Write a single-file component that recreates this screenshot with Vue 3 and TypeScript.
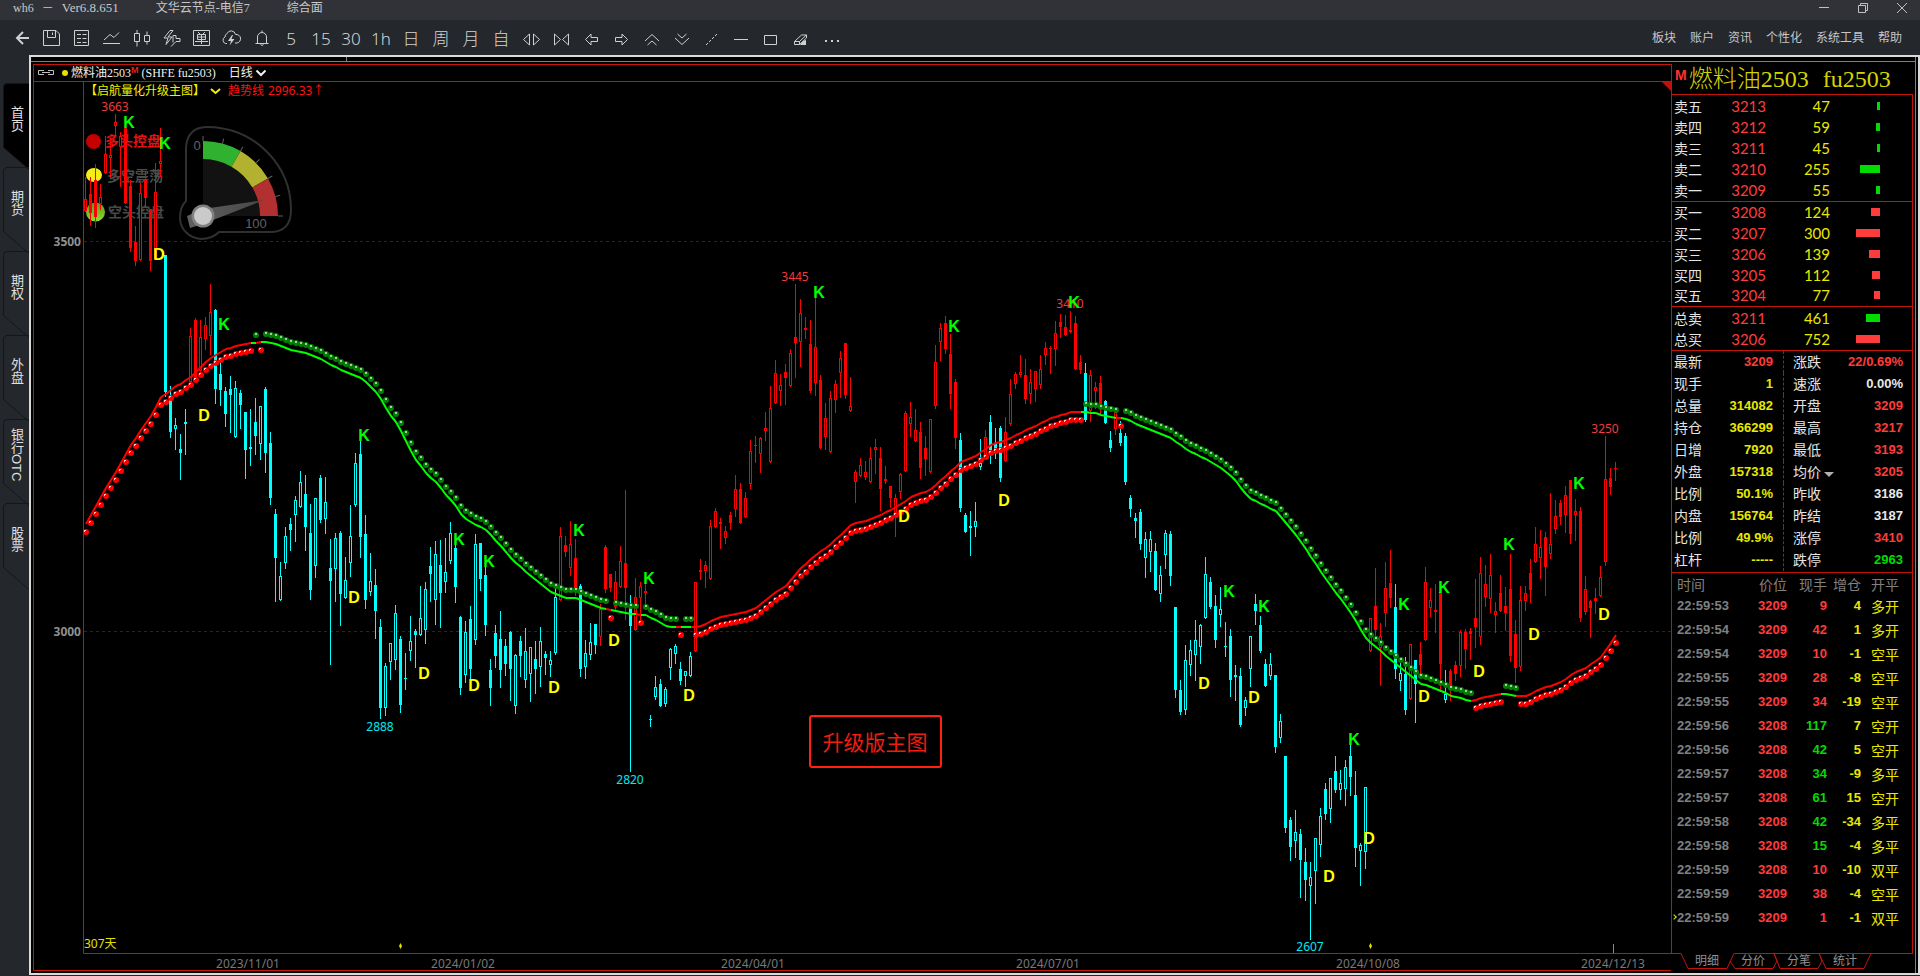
<script setup lang="ts">
interface Tool { name: string; d?: string; solid?: string; text?: string; bold?: boolean }

const tools: Tool[] = [
  { name: '返回', d: 'M20 12H8M14 6l-6 6 6 6', bold: true },
  { name: '保存', d: 'M4.500 4.500H17l3.500 3.500V19.500H4.500ZM8.500 4.500V11.500H16.500V4.500M13.500 6.500V9' },
  { name: '列表', d: 'M5.500 4.500h14v15h-14zM8 8.500h4M13.500 8.500h4M8 12.500h4M13.500 12.500h4M8 16.500h4M13.500 16.500h4' },
  { name: '分时', d: 'M5 14l6-5.500 4 3 5-5M4 17.500h17' },
  { name: 'K线', d: 'M5.500 7.500h5v8h-5zM8 4v3.500M8 15.500v5M15.500 9.500h5v6h-5zM18 5.500v4M18 15.500v3' },
  { name: '闪电', d: 'M11 4.500l-6 7.500h4l-2 6.500 6-7.500h-4l5-6.500zM14 9.500h3v3h4v3h-4l-5 5M14 9.500v7' },
  { name: '下单', d: 'M4.500 4.500h16v15h-16zM9 6l2 2M16 6l-2 2M8.500 8.500h8v5h-8zM8.500 11h8M12.500 8.500V18M6 15.500h13' },
  { name: '云', d: 'M8 17.500H6.500a3.500 3.500 0 0 1-.500-6.500 5 4.500 0 0 1 2-3.500 4.500 4.500 0 0 1 8.500 1 4 4 0 0 1 1.500 8.500h-2', solid: 'M13 9l-4 6h3l-1.500 4.500 5-6.500h-3l1.500-4z' },
  { name: '提醒', d: 'M6.500 17.500h13M8.500 17V11a4.500 4.500 0 0 1 9 0v6M13 4.500v2M11.500 18.500q1.500 2 3 0' },
  { name: '5分钟', text: '5' },
  { name: '15分钟', text: '15' },
  { name: '30分钟', text: '30' },
  { name: '1小时', text: '1h' },
  { name: '日线', text: '日' },
  { name: '周线', text: '周' },
  { name: '月线', text: '月' },
  { name: '自定义', text: '自' },
  { name: '放大', d: 'M10.500 8v11L4.500 13.500zM14.500 8v11l6-5.500z' },
  { name: '缩小', d: 'M5.500 8v11l6-5.500zM19.500 8v11l-6-5.500z' },
  { name: '左移', d: 'M6.500 13.500L12 8v3.500h6.500v4H12V19z' },
  { name: '右移', d: 'M18.500 13.500L13 8v3.500H6.500v4H13V19z' },
  { name: '上翻', d: 'M6 15l7-6.500 7 6.500M8.500 19l4.500-4 4.500 4' },
  { name: '下翻', d: 'M6 12l7 6.500 7-6.500M8.500 8l4.500 4 4.500-4' },
  { name: '斜线', d: 'M7 19l2-2M10 16l2-2M13 13l2-2M16 10l2-2' },
  { name: '横线', d: 'M5 13.500h14' },
  { name: '矩形', d: 'M5.500 9.500h12v9h-12z' },
  { name: '擦除', d: 'M5.500 18.500v-3l7-6.500h5v3l-7 6.500zM5.500 15.500h5v3M10.500 15.500l7-6.500', solid: 'M14 15l3-1v5h-6z' },
  { name: '更多', solid: 'M6 14h2v2H6zM12 14h2v2h-2zM18 14h2v2h-2z' },
]
const menus = ['板块', '账户', '资讯', '个性化', '系统工具', '帮助']
const pages = ['首页', '期货', '期权', '外盘', '银行OTC', '股票']

// One entry per bar: colour code, then high, body top, body bottom and low.
// r/c are hollow red/cyan bodies, R/C are solid ones.
const barSource = `
r177 199 211 211,R177 194 213 225,R164 180 217 227,r184 197 204 209,r136 154 173 173,r139 155 158 177,r114 122 126 136,r132 136 147 186,R128 128 203 203,R180 186 248 251,
R226 242 261 265,r183 193 260 260,R172 179 198 207,R209 209 261 270,r163 192 259 259,r128 161 164 176,C255 255 392 396,C386 397 432 437,c418 425 429 449,C434 449 453 479,
C409 422 424 454,r328 336 382 382,R318 320 378 380,r320 337 371 376,r317 325 339 349,r284 312 336 354,C309 310 389 403,C362 374 390 405,C387 391 414 426,C376 389 395 432,
c381 388 437 437,C390 393 405 428,C412 412 450 478,C409 447 449 465,C398 422 436 454,c406 406 444 459,C387 389 453 472,C432 443 498 504,C509 514 558 601,c562 576 600 600,
c527 536 563 568,C518 524 530 550,c496 500 515 541,c471 482 507 507,C475 494 527 550,C504 533 590 599,c498 498 566 577,C475 478 520 522,c477 502 519 533,C539 568 581 664,
c533 538 569 601,C531 533 594 625,c557 580 598 598,c505 536 563 576,c453 463 505 506,C429 454 537 557,C515 534 600 608,c553 581 592 595,C569 585 611 638,C619 627 708 718,
c663 666 708 715,c643 643 662 679,c605 613 660 669,C636 639 705 712,C653 678 679 689,c616 641 651 660,C629 631 635 667,c586 618 635 635,c582 589 630 643,C547 566 574 601,
c541 554 600 624,C540 565 593 627,c538 572 582 592,c522 533 561 563,C543 548 587 602,C616 617 688 694,c621 632 675 682,C606 619 669 678,c534 544 640 644,C543 543 579 590,
C566 575 625 635,C659 670 688 705,C625 633 656 667,C611 639 670 687,C639 646 664 675,C631 632 669 700,c654 655 706 713,C636 641 656 676,c628 651 680 687,c647 647 674 701,
C641 659 669 693,c627 641 667 686,C651 654 658 674,c651 660 665 676,c586 597 653 654,r527 536 600 600,R536 545 552 556,r521 544 568 575,R539 558 592 595,C584 586 669 676,
c640 653 667 678,c623 642 655 659,C624 624 645 653,r604 609 637 645,R545 547 589 592,R574 574 588 591,r571 582 607 610,r546 561 587 587,R490 563 588 619,C595 608 626 771,
r578 597 630 630,r582 586 598 619,R584 591 593 605,C715 719 720 726,c676 687 697 699,C679 684 706 706,c687 689 704 706,c648 649 668 679,c644 646 654 663,C662 669 681 684,
c671 671 676 686,c652 656 676 676,r582 582 651 651,R559 570 572 579,r561 565 571 587,r520 526 579 579,r508 511 527 527,R518 522 524 548,r526 531 538 543,R512 515 523 529,
r475 489 509 516,R483 489 523 523,r492 498 517 517,r440 451 484 488,R436 445 446 462,r437 438 454 472,r412 428 431 440,r386 408 462 462,r360 373 403 403,r374 385 391 405,
R364 372 378 404,r349 353 386 386,R284 337 343 377,r299 313 342 366,R317 328 330 338,R320 344 391 392,r286 347 383 395,R375 380 448 448,r403 418 437 449,r391 398 452 452,
r380 384 400 412,r351 358 373 397,R343 343 395 398,r377 406 411 411,r470 472 482 502,r458 465 476 476,r461 472 477 479,r447 458 482 482,r439 447 450 473,R447 458 489 510,
R466 479 481 483,R486 486 498 507,r494 498 515 536,r473 474 492 498,r411 413 471 471,r402 417 424 436,r409 430 441 441,R422 432 468 478,R436 448 459 475,r419 419 472 472,
r345 362 406 408,r323 328 342 360,R316 323 349 353,R334 354 394 408,R379 382 438 448,C433 440 508 511,C513 515 532 532,C511 526 528 555,c502 521 527 536,c439 463 467 469,
r430 437 455 457,C415 422 450 463,C428 444 449 458,C426 428 478 481,r417 432 461 461,r379 394 424 425,r372 374 384 388,r355 372 375 376,R359 375 399 403,r369 382 394 403,
r371 371 389 401,r355 369 385 388,r342 348 355 364,R346 348 349 373,r321 333 349 365,R314 322 327 337,R315 327 335 335,R311 330 332 332,R316 323 369 369,R355 362 370 373,
C363 373 420 421,r370 375 411 421,r382 387 391 408,R376 383 405 413,C400 401 423 423,C431 440 448 451,r411 412 429 434,C421 433 443 445,C433 436 482 484,C495 498 509 516,
C513 518 521 537,C509 512 544 549,c532 539 558 577,c531 539 552 571,C543 551 590 590,c566 575 594 601,c530 533 555 568,C531 534 576 585,C607 607 690 697,C680 690 712 714,
c645 660 710 714,c640 650 665 675,c620 640 655 680,c624 625 647 663,c557 574 618 618,C577 582 607 608,C595 606 640 647,c587 609 615 626,C622 646 647 656,C629 636 680 696,
C665 675 677 700,C668 676 725 726,c697 700 708 715,c636 636 669 686,C594 604 611 624,C616 625 651 652,C659 664 686 686,c653 664 676 679,C675 675 747 752,c714 721 738 742,
C756 756 828 832,C817 820 847 860,c810 832 841 857,C829 834 860 897,C848 862 880 900,c862 877 886 939,c838 838 871 903,c808 816 845 856,C783 789 814 819,c778 778 809 822,
C756 771 790 792,c770 783 790 799,c760 767 789 805,C745 756 777 795,C771 795 848 866,c843 845 851 885,c787 787 852 868,r618 618 651 651,R568 606 630 637,r623 636 648 685,
r562 588 613 626,R550 583 598 607,C584 607 669 678,c663 673 681 690,C657 674 710 714,r644 644 699 699,C660 660 684 722,R642 654 665 674,r567 582 640 640,r588 600 608 616,
R584 610 612 632,R592 592 664 690,c670 694 700 702,R669 671 690 700,R661 665 674 680,r630 632 666 676,R629 632 649 668,R628 631 634 659,R579 618 627 647,r557 573 637 644,
r565 584 597 606,r554 575 599 612,r602 611 615 632,R575 593 611 611,R587 606 613 630,R554 589 656 661,R620 634 668 682,r586 600 667 670,r586 593 601 610,R559 573 590 602,
r527 544 562 562,r530 547 558 578,R532 537 567 595,r493 544 554 558,r500 516 529 533,R500 503 517 524,r486 495 515 532,R480 480 534 543,r499 511 515 540,R507 511 618 621,
r576 589 612 614,R600 601 608 637,R588 598 601 613,r566 577 596 596,r436 479 562 565,R468 478 487 494,R462 468 469 480`

const RED = '#ff0000'
const CYAN = '#00ffff'
const bars = barSource.trim().split(',').map((raw, i) => {
  const item = raw.trim()
  const code = item[0]
  const [high, top, bottom, low] = item.slice(1).split(' ').map(Number)
  return {
    x: 85 + i * 5,
    color: code.toLowerCase() === 'r' ? RED : CYAN,
    hollow: code === code.toLowerCase() && bottom - top > 2,
    high, top, bottom, low,
  }
})

// Trend line knots, interpolated for each bar.
const knots: [number, number][] = [
  [85, 524], [98, 500], [110, 480], [120, 463], [130, 445], [140, 430], [152, 413], [160, 397], [167, 393], [175, 386], [183, 382], [192, 375],
  [200, 367], [208, 359], [217, 354], [223, 350], [233, 347], [242, 344], [250, 343], [265, 342], [275, 344], [282, 347], [293, 351], [305, 353],
  [316, 357], [330, 365], [347, 373], [361, 378], [377, 394], [387, 412], [397, 425], [413, 457], [425, 473], [436, 483], [445, 495], [456, 507],
  [461, 516], [471, 523], [486, 530], [510, 558], [530, 576], [550, 592], [566, 598], [575, 598], [600, 608], [611, 610], [617, 611], [630, 614],
  [645, 615], [657, 621], [666, 627], [696, 627], [702, 625], [720, 617], [745, 612], [755, 608], [768, 597], [785, 586], [800, 568], [817, 553],
  [827, 547], [852, 523], [865, 521], [880, 515], [900, 504], [910, 497], [927, 491], [935, 485], [960, 462], [975, 456], [990, 445], [1005, 440],
  [1030, 428], [1050, 418], [1070, 412], [1085, 412], [1095, 413], [1107, 417], [1125, 419], [1142, 427], [1157, 433], [1170, 438], [1190, 452],
  [1205, 459], [1222, 469], [1235, 481], [1247, 497], [1265, 506], [1276, 512], [1297, 537], [1320, 572], [1350, 613], [1366, 640], [1377, 649],
  [1393, 662], [1418, 683], [1433, 688], [1453, 697], [1472, 701], [1487, 696], [1502, 694], [1517, 696], [1525, 696], [1540, 689], [1560, 682],
  [1575, 672], [1583, 669], [1600, 657], [1616, 634],
]
const rises: [number, number][] = [[85, 250], [260, 260], [610, 610], [640, 640], [680, 680], [695, 1080], [1120, 1120], [1475, 1500], [1520, 1615]]

function trendAt(x: number): number {
  const k = Math.max(1, knots.findIndex(p => p[0] >= x))
  const [x0, y0] = knots[k - 1]
  const [x1, y1] = knots[k]
  return Math.round(y0 + ((y1 - y0) * (x - x0)) / (x1 - x0))
}
const trend = bars.map(b => {
  const up = rises.some(([from, to]) => b.x >= from && b.x <= to)
  const y = trendAt(b.x)
  return { x: b.x + 1, y, up, dot: up ? y + 8 : y - 8 }
})
function trendPath(up: boolean): string {
  return trend.slice(1).map((p, i) => (p.up === up ? `M${trend[i].x} ${trend[i].y}L${p.x} ${p.y}` : '')).join('')
}
const risePath = trendPath(true)
const fallPath = trendPath(false)

const longs = [[129, 122], [165, 143], [224, 324], [364, 435], [459, 539], [489, 561], [579, 530], [649, 578], [819, 292], [954, 326], [1074, 302], [1229, 591], [1264, 606], [1354, 739], [1404, 604], [1444, 587], [1509, 544], [1579, 483]]
const shorts = [[159, 254], [204, 415], [354, 597], [424, 673], [474, 685], [554, 687], [614, 640], [689, 695], [904, 516], [1004, 500], [1204, 683], [1254, 697], [1329, 876], [1369, 838], [1424, 696], [1479, 671], [1534, 634], [1604, 614]]
const peaks: [string, number, number][] = [['3663', 115, 106], ['3445', 795, 276], ['3410', 1070, 303], ['3250', 1605, 428]]
const troughs: [string, number, number][] = [['2888', 380, 726], ['2820', 630, 779], ['2607', 1310, 946]]
const dates: [string, number][] = [['2023/11/01', 248], ['2024/01/02', 463], ['2024/04/01', 753], ['2024/07/01', 1048], ['2024/10/08', 1368], ['2024/12/13', 1613]]
const gaugeTicks = [0, 15, 30, 45, 60, 75, 90]

type Level = [string, number, number, number, 'green' | 'red']
const book: Level[][] = [
  [['卖五', 3213, 47, 3, 'green'], ['卖四', 3212, 59, 4, 'green'], ['卖三', 3211, 45, 3, 'green'], ['卖二', 3210, 255, 20, 'green'], ['卖一', 3209, 55, 4, 'green']],
  [['买一', 3208, 124, 9, 'red'], ['买二', 3207, 300, 24, 'red'], ['买三', 3206, 139, 11, 'red'], ['买四', 3205, 112, 8, 'red'], ['买五', 3204, 77, 6, 'red']],
  [['总卖', 3211, 461, 14, 'green'], ['总买', 3206, 752, 24, 'red']],
]
const facts: [string, string, string, string, string, string][] = [
  ['最新', '3209', 'red', '涨跌', '22/0.69%', 'red'],
  ['现手', '1', 'yellow', '速涨', '0.00%', 'white'],
  ['总量', '314082', 'yellow', '开盘', '3209', 'red'],
  ['持仓', '366299', 'yellow', '最高', '3217', 'red'],
  ['日增', '7920', 'yellow', '最低', '3193', 'red'],
  ['外盘', '157318', 'yellow', '均价', '3205', 'red'],
  ['比例', '50.1%', 'yellow', '昨收', '3186', 'white'],
  ['内盘', '156764', 'yellow', '昨结', '3187', 'white'],
  ['比例', '49.9%', 'yellow', '涨停', '3410', 'red'],
  ['杠杆', '-----', 'yellow', '跌停', '2963', 'green'],
]
const trades: [string, number, number, string, number, string][] = [
  ['22:59:53', 3209, 9, 'red', 4, '多开'],
  ['22:59:54', 3209, 42, 'red', 1, '多开'],
  ['22:59:54', 3209, 10, 'red', -1, '空平'],
  ['22:59:55', 3209, 28, 'red', -8, '空平'],
  ['22:59:55', 3209, 34, 'red', -19, '空平'],
  ['22:59:56', 3208, 117, 'green', 7, '空开'],
  ['22:59:56', 3208, 42, 'green', 5, '空开'],
  ['22:59:57', 3208, 34, 'green', -9, '多平'],
  ['22:59:57', 3208, 61, 'green', 15, '空开'],
  ['22:59:58', 3208, 42, 'green', -34, '多平'],
  ['22:59:58', 3208, 15, 'green', -4, '多平'],
  ['22:59:59', 3208, 10, 'red', -10, '双平'],
  ['22:59:59', 3209, 38, 'red', -4, '空平'],
  ['22:59:59', 3209, 1, 'red', -1, '双平'],
]
const sheets = ['明细', '分价', '分笔', '统计']
</script>

<template>
  <div class="app">
    <header class="titlebar">
      <span>wh6</span><span class="dash">－</span><span class="version">Ver6.8.651</span>
      <span class="node">文华云节点-电信7</span><span>综合面</span>
      <div class="window-buttons">
        <button type="button" aria-label="最小化"><svg viewBox="0 0 16 16"><path d="M3 7.500h10" /></svg></button>
        <button type="button" aria-label="还原"><svg viewBox="0 0 16 16"><path d="M3.500 5.500h7v7h-7zM5.500 5.500v-2h7v7h-2" /></svg></button>
        <button type="button" aria-label="关闭"><svg viewBox="0 0 16 16"><path d="M3 3l10 10M13 3L3 13" /></svg></button>
      </div>
    </header>

    <div class="toolbar">
      <button v-for="t in tools" :key="t.name" type="button" class="tool" :aria-label="t.name">
        <template v-if="t.text">{{ t.text }}</template>
        <svg v-else viewBox="0 0 24 24" :class="{ bold: t.bold }">
          <path v-if="t.d" :d="t.d" />
          <path v-if="t.solid" class="solid" :d="t.solid" />
        </svg>
      </button>
      <nav class="menus">
        <button v-for="m in menus" :key="m" type="button">{{ m }}</button>
      </nav>
    </div>

    <div class="body">
      <nav class="pages">
        <button v-for="(p, i) in pages" :key="p" type="button" :class="{ active: i === 0 }">
          <svg viewBox="0 0 29 88" aria-hidden="true"><path d="M29 .5H7Q3.500 .5 3.500 4.500V64.500L29 86.500" /></svg>
          <span>{{ p }}</span>
        </button>
      </nav>

      <main class="workspace">
        <div class="inner">
          <div class="strip"><i></i></div>
          <div class="panels">
            <section class="chart">
              <div class="chart-head">
                <svg class="link" viewBox="0 0 18 8"><path d="M7 1.500H1.500v4H7M11 1.500h5.500v4H11M5 3.500h8" /></svg>
                <i class="lamp"></i>
                <span>燃料油2503</span><sup>M</sup><span class="code">(SHFE fu2503)</span>
                <button type="button" class="period">日线<svg viewBox="0 0 12 8"><path d="M1.500 1.500L6 6l4.500-4.500" /></svg></button>
              </div>

              <svg class="plot" viewBox="34 82 1637 888" role="img" aria-label="燃料油2503 日线">
                <defs>
                  <linearGradient id="leaf" x1="0" y1="0" x2="0" y2="1">
                    <stop offset="0" stop-color="#5f9a1c" />
                    <stop offset="1" stop-color="#8fd830" />
                  </linearGradient>
                  <linearGradient id="needle" x1="0" y1="0" x2="1" y2="0">
                    <stop offset="0" stop-color="#606060" />
                    <stop offset="1" stop-color="#484848" />
                  </linearGradient>
                  <g id="ball-red">
                    <circle r="3" fill="#ff0000" />
                    <rect x="-2" y="-2" width="2" height="1" fill="#ffc0c0" />
                    <rect x="-2" y="-2" width="1" height="2" fill="#ffc0c0" />
                  </g>
                  <g id="ball-green">
                    <circle r="3" fill="#008000" />
                    <rect x="-1" y="-2" width="2" height="2" fill="#a8c8a8" />
                  </g>
                </defs>

                <path class="frame" d="M83.500 82V953.500H1671" />
                <path class="grid" d="M84 241.500H1671M84 631.500H1671" />
                <path d="M1662 82h9v9z" fill="#c01008" />

                <g class="signals">
                  <circle cx="93.500" cy="141.500" r="7.500" fill="#c40000" />
                  <ellipse cx="94" cy="175" rx="8" ry="7" fill="#f8ec18" />
                  <circle cx="95.500" cy="212" r="9.500" fill="url(#leaf)" />
                  <text x="105" y="140" fill="#e01414">多头控盘</text>
                  <text x="107" y="175" fill="#4c4c4c">多空震荡</text>
                  <text x="108" y="211" fill="#484848">空头控盘</text>
                </g>

                <g class="gauge">
                  <path class="case" d="M186 201V148Q187 127 208 127C255 128 291 165 291 210Q291 232 270 232H219C216 235 211 239 201 239C189 238 180 229 180 218C180 210 182 205 186 201Z" />
                  <path d="M203 216V159A57 57 0 0 1 260 216Z" fill="#121212" />
                  <path d="M203 141A75 75 0 0 1 240.500 151.050L231.500 166.640A57 57 0 0 0 203 159Z" fill="#30b230" />
                  <path d="M240.500 151.050A75 75 0 0 1 267.950 178.500L252.360 187.500A57 57 0 0 0 231.500 166.640Z" fill="#b2b230" />
                  <path d="M267.950 178.500A75 75 0 0 1 278 216H260A57 57 0 0 0 252.360 187.500Z" fill="#b23030" />
                  <path v-for="a in gaugeTicks" :key="a" class="tick" d="M203 141V136" :transform="`rotate(${a} 203 216)`" />
                  <path d="M187 216l3 12 13-4 61-24-61 9z" fill="url(#needle)" />
                  <circle cx="203" cy="216" r="11.500" fill="#808080" />
                  <circle cx="203" cy="216" r="9" fill="#cacaca" />
                  <text x="197" y="145">0</text>
                  <text x="256" y="223">100</text>
                </g>

                <g class="bars">
                  <template v-for="b in bars" :key="b.x">
                    <rect :x="b.x" :y="b.high" width="1" :height="b.low - b.high + 1" :fill="b.color" />
                    <rect :x="b.x - 1" :y="b.top" width="3" :height="b.bottom - b.top" :fill="b.color" />
                    <rect v-if="b.hollow" :x="b.x" :y="b.top + 1" width="1" :height="b.bottom - b.top - 2" fill="#000" />
                  </template>
                </g>

                <path class="trend" :d="risePath" stroke="#ff0000" />
                <path class="trend" :d="fallPath" stroke="#00ff00" />
                <use v-for="p in trend" :key="p.x" :href="p.up ? '#ball-red' : '#ball-green'" :x="p.x" :y="p.dot" />

                <g class="values">
                  <text v-for="[v, x, y] in peaks" :key="v" :x="x" :y="y" fill="#f03c3c">{{ v }}</text>
                  <text v-for="[v, x, y] in troughs" :key="v" :x="x" :y="y" fill="#00e8f0">{{ v }}</text>
                  <text v-for="[v, x] in dates" :key="v" :x="x" y="963" fill="#787878">{{ v }}</text>
                </g>
                <g class="marks">
                  <text v-for="[x, y] in longs" :key="x" :x="x" :y="y" fill="#00ff00">K</text>
                  <text v-for="[x, y] in shorts" :key="x" :x="x" :y="y" fill="#ffff00">D</text>
                </g>
                <g class="axis">
                  <text x="81" y="241">3500</text>
                  <text x="81" y="631">3000</text>
                </g>

                <g class="legend">
                  <text x="85" y="90" fill="#f0f000">【启航量化升级主图】</text>
                  <path d="M211 89l4.500 4 4.500-4" stroke="#f0f000" stroke-width="2" />
                  <text x="228" y="90" fill="#ff1010">趋势线</text>
                  <text x="268" y="90" fill="#ff1010">2996.33↑</text>
                  <text x="84" y="943" fill="#e0e000">307天</text>
                </g>
                <path d="M400.500 943l1.500 3-1.500 3-1.500-3zM1370.500 943l1.500 3-1.500 3-1.500-3z" fill="#e8e000" />
                <path d="M1613.500 944v9" stroke="#888" />

                <rect class="badge" x="810" y="716" width="131" height="51" rx="2" />
                <text class="badge-text" x="875" y="741">升级版主图</text>
              </svg>
            </section>

            <aside class="side">
              <div class="quote">
                <h1><sup>M</sup><span>燃料油2503</span><span>fu2503</span></h1>
                <div class="box">
                  <table v-for="(group, g) in book" :key="g" class="book">
                    <tbody>
                      <tr v-for="[label, price, volume, size, tone] in group" :key="label">
                        <th scope="row">{{ label }}</th>
                        <td class="red">{{ price }}</td>
                        <td class="yellow">{{ volume }}</td>
                        <td><i :class="tone" :style="{ width: size + 'px' }"></i></td>
                        <td></td>
                      </tr>
                    </tbody>
                  </table>

                  <table class="facts">
                    <tbody>
                      <tr v-for="([a, av, at, b, bv, bt], i) in facts" :key="i">
                        <th scope="row">{{ a }}</th>
                        <td :class="at">{{ av }}</td>
                        <th scope="row">{{ b }}<button v-if="b === '均价'" type="button" aria-label="切换均价"></button></th>
                        <td :class="bt">{{ bv }}</td>
                      </tr>
                    </tbody>
                  </table>

                  <table class="trades">
                    <thead>
                      <tr><th>时间</th><th>价位</th><th>现手</th><th>增仓</th><th>开平</th></tr>
                    </thead>
                    <tbody>
                      <tr v-for="([time, price, lots, tone, change, kind], i) in trades" :key="i">
                        <td>{{ time }}</td>
                        <td class="red">{{ price }}</td>
                        <td :class="tone">{{ lots }}</td>
                        <td class="yellow">{{ change }}</td>
                        <td class="yellow">{{ kind }}</td>
                      </tr>
                    </tbody>
                  </table>
                </div>
              </div>
              <nav class="sheets">
                <svg viewBox="0 0 242 20" aria-hidden="true">
                  <path d="M0 .5H10L17 15.500H56L63 .5H242M59 8L64 15.500H102L106 8L103 .5L109 15.500H147L151 8L148 .5L155 15.500H193L200 .5" />
                </svg>
                <div>
                  <button v-for="s in sheets" :key="s" type="button">{{ s }}</button>
                </div>
              </nav>
            </aside>
          </div>
        </div>
      </main>
    </div>
  </div>
</template>

<style>
html,
body {
  background: #24272c;
}
</style>

<style scoped>
.app {
  display: flex;
  flex-direction: column;
  min-height: 100vh;
  background: #24272c;
  color: #e0e0e0;
  font: 12px/16px "Liberation Serif", "Noto Sans CJK SC", serif;
}
button {
  padding: 0;
  border: 0;
  background: none;
  color: inherit;
  font: inherit;
  cursor: pointer;
}
svg {
  fill: none;
}
.titlebar {
  display: flex;
  align-items: center;
  height: 20px;
  padding: 0 10px 4px 13px;
  box-sizing: border-box;
  background: #303237;
  color: #c8c8c8;
  white-space: nowrap;
}
.titlebar > .dash {
  margin: 0 8px;
}
.titlebar > .version {
  font-size: 13px;
}
.titlebar > .node {
  margin: 0 37px;
}
.window-buttons {
  display: flex;
  gap: 23px;
  margin-left: auto;
}
.window-buttons svg {
  display: block;
  width: 16px;
  height: 16px;
  stroke: #c0c0c0;
}
.toolbar {
  display: flex;
  align-items: center;
  height: 35px;
  padding-left: 6px;
  color: #d4d4d4;
}
.tool {
  display: grid;
  place-items: center;
  flex: 0 0 30px;
  height: 35px;
  padding-top: 3px;
  font: 17px/24px "Noto Sans", "Noto Sans CJK SC", sans-serif;
  font-weight: 300;
}
.tool:has(svg) {
  padding-top: 1px;
}
.tool svg {
  width: 24px;
  height: 24px;
  stroke: #d0d0d0;
}
.tool svg.bold {
  stroke-width: 2;
}
.tool .solid {
  fill: #d0d0d0;
  stroke: none;
}
.menus {
  display: flex;
  gap: 14px;
  margin-left: auto;
  padding-right: 18px;
}
.menus button {
  color: #c4c6ca;
}
.body {
  display: flex;
  flex: 1;
  padding-bottom: 1px;
}
.pages {
  width: 29px;
  flex: none;
  padding-top: 28px;
}
.pages button {
  display: grid;
  width: 29px;
  height: 84px;
}
.pages svg,
.pages span {
  grid-area: 1 / 1;
}
.pages svg {
  width: 29px;
  height: 88px;
  stroke: #14161a;
}
.pages .active svg {
  fill: #000;
}
.pages span {
  place-self: start;
  width: 16px;
  height: 72px;
  margin-left: 8px;
  font: 13px/16px "Liberation Sans", "Noto Sans CJK SC", sans-serif;
  writing-mode: vertical-rl;
  text-align: center;
}
.workspace {
  flex: 1;
  min-width: 0;
  display: flex;
  border: 2px solid #dcdad8;
  background: #000;
}
.inner {
  flex: 1;
  min-width: 0;
  display: flex;
  flex-direction: column;
  margin-right: 2px;
  border-right: 1px solid #808080;
}
.strip {
  height: 4px;
  border-bottom: 1px solid #808080;
}
.strip i {
  display: block;
  width: 315px;
  height: 4px;
  border-right: 1px solid #808080;
}
.panels {
  flex: 1;
  min-height: 0;
  display: flex;
  padding: 2px 2px 0 2px;
}
.chart {
  flex: 1;
  min-width: 0;
  display: flex;
  flex-direction: column;
  margin-bottom: 2px;
  border: solid #c41408;
  border-width: 1px 0 1px 1px;
}
.chart-head {
  display: flex;
  align-items: center;
  height: 16px;
  padding-left: 3px;
  border-bottom: 1px solid #c41408;
  color: #f0f0f0;
  line-height: 14px;
  white-space: nowrap;
}
.chart-head .link {
  width: 18px;
  height: 8px;
  stroke: #c0c0c0;
}
.lamp {
  width: 6px;
  height: 6px;
  margin: 0 3px 0 7px;
  border-radius: 50%;
  background: #e8e000;
}
.chart-head sup {
  align-self: start;
  margin-right: 3px;
  color: #e02020;
  font: bold 9px/10px "Liberation Sans", sans-serif;
}
.chart-head .code {
  margin-right: 13px;
}
.period {
  display: flex;
  align-items: center;
  gap: 2px;
}
.period svg {
  width: 12px;
  height: 8px;
  stroke: #f0f0f0;
  stroke-width: 2;
}
.plot {
  display: block;
  flex: 1;
  width: 100%;
  min-height: 0;
}
.plot text {
  dominant-baseline: central;
}
.frame {
  stroke: #c41408;
}
.grid {
  stroke: #800000;
  stroke-dasharray: 3 3;
}
.signals text {
  font: bold 14px "Noto Sans CJK SC", sans-serif;
}
.gauge .case {
  stroke: #303030;
  stroke-width: 2;
}
.gauge .tick {
  stroke: #606060;
}
.gauge text {
  fill: #606060;
  font: 13px "Liberation Sans", sans-serif;
  text-anchor: middle;
}
.bars {
  shape-rendering: crispEdges;
}
.trend {
  stroke-width: 2;
}
.values text {
  font: 12px "Noto Sans", sans-serif;
  text-anchor: middle;
}
.marks text {
  font: bold 16px "Liberation Sans", sans-serif;
  text-anchor: middle;
}
.axis text {
  fill: #909090;
  font: bold 12px "Noto Sans", sans-serif;
  text-anchor: end;
}
.legend text {
  font: 12px "Noto Sans", "Noto Sans CJK SC", sans-serif;
}
.badge {
  stroke: #ff2010;
  stroke-width: 2;
}
.badge-text {
  fill: #f01c10;
  font: 21px "Noto Sans CJK SC", sans-serif;
  text-anchor: middle;
}
.side {
  flex: none;
  width: 242px;
  display: flex;
  flex-direction: column;
}
.quote {
  flex: 1;
  display: flex;
  flex-direction: column;
  border-left: 1px solid #c41408;
}
h1 {
  display: flex;
  align-items: center;
  height: 30px;
  margin: 0;
  padding-left: 3px;
  color: #d4d400;
  font: 24px/30px "Liberation Serif", "Noto Sans CJK SC", serif;
  font-weight: 300;
  white-space: nowrap;
}
h1 sup {
  align-self: start;
  margin-right: 2px;
  color: #ff3030;
  font: bold 14px/22px "Liberation Sans", sans-serif;
}
h1 span + span {
  margin-left: 14px;
}
.box {
  flex: 1;
  border: solid #c41408;
  border-width: 1px 1px 0 0;
}
table {
  width: 100%;
  border-collapse: separate;
  border-spacing: 0;
  table-layout: fixed;
}
th,
td {
  padding: 0;
  text-align: right;
  font-weight: 400;
  white-space: nowrap;
}
th {
  color: #e4e4e4;
  font: 14px/20px "Noto Sans CJK SC", sans-serif;
}
.red { color: #ff3c3c; }
.green { color: #00dc00; }
.yellow { color: #e8e800; }
.white { color: #e8e8e8; }
.book {
  border-bottom: 1px solid #c41408;
}
.book:nth-child(odd) {
  padding-top: 1px;
}
.book tr {
  height: 21px;
}
.book:nth-child(2) tr:last-child {
  height: 20px;
}
.book th,
.book td {
  padding-bottom: 2px;
  line-height: 18px;
}
.book th {
  width: 42px;
  padding-left: 2px;
  text-align: left;
}
.book td {
  width: 50px;
  font: 15px/18px Lato, sans-serif;
}
.book td:nth-child(3) { width: 64px; }
.book td:nth-child(4) { width: 50px; }
.book td:nth-child(5) { width: 32px; }
.book i {
  display: inline-block;
  height: 8px;
  vertical-align: 2px;
}
.book i.green { background: #00dc00; }
.book i.red { background: #ff3c3c; }
.facts {
  padding-bottom: 1px;
  border-bottom: 1px solid #c41408;
}
.facts tr {
  height: 22px;
}
.facts th {
  width: 42px;
  padding: 0 0 2px 2px;
  text-align: left;
}
.facts td {
  font: bold 13px/20px "Liberation Sans", sans-serif;
}
.facts td:nth-child(2) {
  width: 57px;
  padding-right: 10px;
  border-right: 1px dashed #b81408;
}
.facts th:nth-child(3) {
  width: 48px;
  padding-left: 9px;
}
.facts td:nth-child(4) {
  padding-right: 9px;
}
.facts button {
  width: 0;
  height: 0;
  margin-left: 3px;
  border: solid transparent;
  border-width: 5px 5px 0;
  border-top-color: #b0b0b0;
}
.trades th {
  height: 21px;
  color: #808080;
}
.trades tbody tr {
  height: 24px;
}
.trades td {
  font: bold 13px/20px "Liberation Sans", sans-serif;
}
.trades th:first-child,
.trades td:first-child {
  width: 65px;
  padding-left: 5px;
  text-align: left;
  color: #808080;
}
.trades tbody tr:last-child td:first-child {
  padding-left: 0;
}
.trades tbody tr:last-child td:first-child::before {
  content: "";
  display: inline-block;
  width: 3px;
  height: 3px;
  margin-right: 1px;
  vertical-align: 3px;
  border: solid #e8e800;
  border-width: 1px 1px 0 0;
  rotate: 45deg;
}
.trades th:nth-child(2) { width: 45px; }
.trades th:nth-child(3) { width: 40px; }
.trades th:nth-child(4) { width: 34px; }
.trades th:last-child,
.trades td:last-child {
  padding-left: 10px;
  text-align: left;
}
.trades td:last-child {
  font: 14px/20px "Noto Sans CJK SC", sans-serif;
}
.sheets {
  display: grid;
}
.sheets svg,
.sheets div {
  grid-area: 1 / 1;
}
.sheets svg {
  width: 242px;
  height: 20px;
  stroke: #c41408;
}
.sheets div {
  display: flex;
  padding-left: 13px;
}
.sheets button {
  flex: 0 0 46px;
  height: 16px;
  color: #909090;
}
</style>
